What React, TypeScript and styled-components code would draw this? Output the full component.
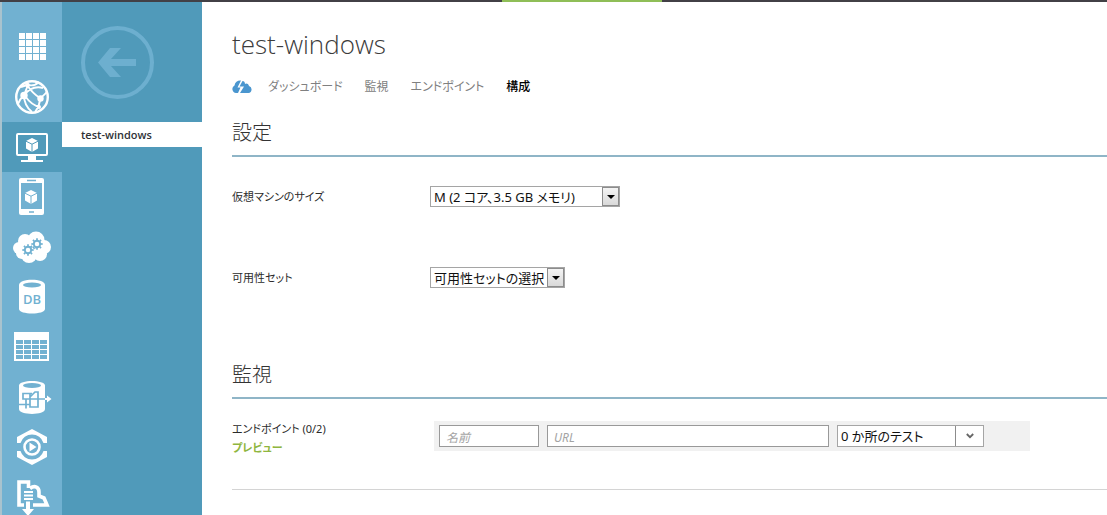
import React from "react";
import styled, { createGlobalStyle } from "styled-components";

const RAIL = "#71b1d1";
const BLUE = "#509aba";

const GlobalStyle = createGlobalStyle`
  *, *::before, *::after { box-sizing: border-box; }
  body {
    margin: 0;
    background: #fff;
    color: #2b2b2b;
    font-family: "Noto Sans", "Noto Sans CJK JP", sans-serif;
    font-feature-settings: "palt";
    font-size: 12px;
  }
  button, input, select { font: inherit; font-feature-settings: inherit; }
`;

const Page = styled.div`
  display: flex;
  flex-direction: column;
  height: 100vh;
  overflow: hidden;
`;

const TopBar = styled.div`
  flex: none;
  height: 2px;
  background: #424046;
  display: flex;
  justify-content: center;
  padding-left: 57px;
`;

const TopMark = styled.div`
  width: 160px;
  background: #8fbe57;
`;

const Body = styled.div`
  flex: 1;
  min-height: 0;
  display: flex;
`;

const Rail = styled.nav`
  flex: none;
  width: 62px;
  padding-top: 20px;
  border-left: 2px solid #a9c3ce;
  background: ${RAIL};
`;

const RailButton = styled.button<{ $active?: boolean }>`
  display: flex;
  align-items: center;
  justify-content: center;
  width: 100%;
  height: 50px;
  padding: 0;
  border: 0;
  background: ${(p) => (p.$active ? BLUE : "transparent")};
  color: ${(p) => (p.$active ? BLUE : RAIL)};
`;

const SubNav = styled.nav`
  flex: none;
  width: 140px;
  padding-top: 23px;
  background: ${BLUE};
`;

const BackButton = styled.button`
  display: block;
  margin: 0 0 22px 18px;
  padding: 0;
  border: 0;
  background: none;
  height: 75px;
`;

const SubNavLink = styled.a`
  display: block;
  height: 25px;
  padding-left: 19px;
  background: #fff;
  color: #2f3237;
  font-family: "Open Sans", sans-serif;
  font-size: 11px;
  font-weight: 600;
  line-height: 25px;
  text-decoration: none;
`;

const Main = styled.main`
  flex: 1;
  min-width: 0;
  padding: 24px 0 0 30px;
`;

const Title = styled.h1`
  margin: 0;
  color: #3c3c3c;
  font-family: "Open Sans", sans-serif;
  font-size: 26px;
  font-weight: 300;
  line-height: 36px;
`;

const Tabs = styled.nav`
  display: flex;
  align-items: center;
  gap: 22px;
  height: 20px;
  margin-top: 15px;
`;

const Logo = styled.svg`
  margin-right: -6px;
`;

const Tab = styled.a<{ $active?: boolean }>`
  color: ${(p) => (p.$active ? "#000" : "#808080")};
  font-weight: ${(p) => (p.$active ? 500 : 400)};
  line-height: 20px;
  text-decoration: none;
`;

const SectionTitle = styled.h2`
  margin: 22px 0 0;
  padding-bottom: 8px;
  border-bottom: 2px solid #8fb5c7;
  color: #333;
  font-size: 20px;
  font-weight: 300;
  line-height: 28px;
`;

const Fields = styled.div`
  display: flex;
  flex-direction: column;
  gap: 60px;
  padding: 29px 0 51px;
`;

const Field = styled.div`
  display: flex;
  align-items: center;
`;

const LabelCell = styled.div`
  flex: none;
  width: 198px;
  font-size: 11px;
  line-height: 19px;
`;

const Preview = styled.a`
  display: block;
  color: #8fb63f;
  font-weight: 700;
  text-decoration: none;
`;

const SelectBox = styled.div<{ $width: number; $height: number }>`
  display: grid;
  flex: none;
  width: ${(p) => p.$width}px;
  height: ${(p) => p.$height}px;
  border: 1px solid #a5a5a5;
  background: #fff;
  > * { grid-area: 1 / 1; }
`;

const Select = styled.select`
  appearance: none;
  width: 100%;
  height: 100%;
  padding: 0 18px 0 3px;
  border: 0;
  background: none;
  color: #111;
  font-size: 13px;
`;

const ArrowCell = styled.span<{ $flat?: boolean }>`
  display: flex;
  align-items: center;
  justify-content: center;
  justify-self: end;
  width: ${(p) => (p.$flat ? 28 : 17)}px;
  border: solid #8c8c8c;
  border-width: ${(p) => (p.$flat ? "0 0 0 1px" : "1px")};
  background: ${(p) => (p.$flat ? "#fff" : "linear-gradient(#f4f4f4, #d9d9d9)")};
  pointer-events: none;
`;

const EndpointRow = styled.div`
  display: flex;
  align-items: flex-start;
  padding-top: 20px;
  min-height: 91px;
  border-bottom: 1px solid #d4d4d4;
`;

const EndpointPanel = styled.div`
  flex: 1;
  display: flex;
  gap: 8px;
  max-width: 596px;
  height: 30px;
  margin: 2px 0 0 4px;
  padding: 4px 46px 4px 5px;
  background: #f1f1f1;
`;

const TextInput = styled.input<{ $grow?: boolean }>`
  flex: ${(p) => (p.$grow ? "1 1 0" : "0 0 100px")};
  min-width: 0;
  width: 100px;
  height: 22px;
  padding: 2px 6px 0;
  border: 1px solid #999;
  background: #fff;
  &::placeholder {
    color: #a3a3a3;
    font-style: italic;
    opacity: 1;
  }
`;

function Cube({ x, y }: { x: number; y: number }) {
  return (
    <g transform={`translate(${x} ${y})`}>
      <path d="M0-7 6-4v7.500L0 7l-6-3.500V-4z" fill="#fff" />
      <path d="M-6-3.800 0-.8l6-3M0-.8V7" fill="none" stroke="currentColor" strokeWidth="1" />
    </g>
  );
}

function Gear({ x, y }: { x: number; y: number }) {
  return (
    <g transform={`translate(${x} ${y})`} fill="none" stroke="currentColor">
      <circle r="3.200" strokeWidth="1.900" />
      {[0, 45, 90, 135, 180, 225, 270, 315].map((a) => (
        <path key={a} d="M0-3.800V-5.700" strokeWidth="1.700" transform={`rotate(${a})`} />
      ))}
    </g>
  );
}

const steps = [0, 1, 2, 3];

const icons: { name: string; art: React.ReactNode }[] = [
  {
    name: "すべてのアイテム",
    art: steps.flatMap((r) =>
      steps.map((c) => <rect key={`${r}${c}`} x={7 + c * 7} y={6 + r * 7} width="6" height="6" fill="#fff" />)
    ),
  },
  {
    name: "Web サイト",
    art: (
      <g fill="none" stroke="#fff" strokeWidth="1.900">
        <circle cx="20" cy="20" r="15.800" strokeWidth="2.400" />
        <path d="M12 18C17 12 24 9 31 11M16 8l-4 10M15 8c4 6 8 10 13 13M15 8l-6 2M12 18c-3 3-5 6-6 9M12 18c0 7 3 13 8 17M28 21c0 5-2 10-5 14M28 21c3-2 6-4 7-7M13 19c5 7 9 10 15 11M16 8c4 1 8 0 11-3" />
        <g fill="#fff" stroke="none">
          <circle cx="12" cy="18.500" r="3.700" />
          <circle cx="28.500" cy="21.500" r="3.200" />
          <circle cx="15.500" cy="8" r="2.300" />
          <circle cx="27" cy="30" r="2" />
        </g>
      </g>
    ),
  },
  {
    name: "仮想マシン",
    art: (
      <>
        <rect x="5" y="7" width="30" height="21" rx="1" fill="none" stroke="#fff" strokeWidth="2" />
        <path d="M16 29h8v4h7v2H9v-2h7z" fill="#fff" />
        <Cube x={20} y={18} />
      </>
    ),
  },
  {
    name: "モバイル サービス",
    art: (
      <>
        <rect x="7" y="1" width="25" height="37" rx="2" fill="#fff" />
        <rect x="9" y="6" width="21" height="26" fill="currentColor" />
        <path d="M15 3.500h9M17 35h5" stroke="currentColor" strokeWidth="1.500" />
        <Cube x={19} y={20} />
      </>
    ),
  },
  {
    name: "クラウド サービス",
    art: (
      <>
        <g fill="#fff">
          <circle cx="7" cy="21" r="6" />
          <circle cx="13" cy="14" r="7" />
          <circle cx="24" cy="13" r="8.500" />
          <circle cx="32" cy="20" r="7" />
          <circle cx="28" cy="27" r="7" />
          <circle cx="17" cy="28" r="8" />
          <circle cx="10" cy="26" r="6" />
        </g>
        <Gear x={16} y={23} />
        <Gear x={25} y={17} />
      </>
    ),
  },
  {
    name: "SQL データベース",
    art: (
      <>
        <path d="M7 8c0-7 26-7 26 0v24c0 6-26 6-26 0z" fill="#fff" />
        <ellipse cx="20" cy="8" rx="9" ry="2.600" fill="currentColor" />
        <text x="20" y="27" textAnchor="middle" fill="currentColor" fontFamily="Open Sans, sans-serif" fontSize="13" fontWeight="600">
          DB
        </text>
      </>
    ),
  },
  {
    name: "ストレージ",
    art: (
      <>
        <rect x="2" y="5" width="35" height="29" fill="#fff" />
        {steps.flatMap((r) =>
          steps.map((c) => (
            <rect key={`${r}${c}`} x={4 + c * 8} y={13 + r * 5} width="7" height="4" fill="currentColor" />
          ))
        )}
      </>
    ),
  },
  {
    name: "HDInsight",
    art: (
      <>
        <path d="M7 8.500c0-6 26-6 26 0V32c0 6.500-26 6.500-26 0z" fill="#fff" />
        <ellipse cx="20" cy="8.500" rx="9" ry="2.600" fill="currentColor" />
        <path
          d="M20 16.500h-9V22h22M7 27.500h11V17M14 31.500v-4M18 20l5-5h3v15h-8v-3M14 22v5"
          fill="none"
          stroke="currentColor"
          strokeWidth="1.700"
        />
        <path d="M33 21h2v-2.500l4.500 3.500-4.500 3.500V23h-2z" fill="#fff" />
      </>
    ),
  },
  {
    name: "メディア サービス",
    art: (
      <>
        <path d="M5 16v-6L20 2l15 8v6h-3.500a12 12 0 0 0-23 0zM5 24v6l15 8 15-8v-6h-3.500a12 12 0 0 1-23 0z" fill="#fff" />
        <circle cx="20" cy="20" r="7.500" fill="none" stroke="#fff" strokeWidth="2.600" />
        <path d="M17.500 15.500v9l7-4.500z" fill="#fff" />
      </>
    ),
  },
  {
    name: "インポート",
    art: (
      <>
        <path
          d="M12 28H7V5h9.500v6M18 11.500c5-4 9-1 9 3.500v4l5 2 3 7H21"
          fill="none"
          stroke="#fff"
          strokeWidth="3.600"
        />
        <path d="M12 15h9M12 18.500h9M12 22h9" stroke="#fff" strokeWidth="2" />
        <path d="M14 24.500h4V32h4l-6 7-6-7h4z" fill="#fff" />
      </>
    ),
  },
];

function Triangle() {
  return (
    <svg width="8" height="4" viewBox="0 0 8 4" aria-hidden="true">
      <path d="M0 0h8L4 4z" fill="#000" />
    </svg>
  );
}

function Chevron() {
  return (
    <svg width="8" height="6" viewBox="0 0 8 6" aria-hidden="true">
      <path d="M.8 1 4 4.200 7.200 1" fill="none" stroke="#666" strokeWidth="1.800" />
    </svg>
  );
}

export default function App() {
  return (
    <>
      <GlobalStyle />
      <Page>
        <TopBar>
          <TopMark />
        </TopBar>
        <Body>
          <Rail>
            {icons.map((icon, i) => (
              <RailButton key={icon.name} type="button" aria-label={icon.name} $active={i === 2}>
                <svg width="40" height="40" viewBox="0 0 40 40" aria-hidden="true">
                  {icon.art}
                </svg>
              </RailButton>
            ))}
          </Rail>
          <SubNav>
            <BackButton type="button" aria-label="戻る">
              <svg width="75" height="75" viewBox="0 0 75 75" aria-hidden="true">
                <circle cx="37.500" cy="37.500" r="34.500" fill="none" stroke="#6dafcf" strokeWidth="4" />
                <path d="M18 37.500 30 23h11L31 34h25v7H31l10 11H30z" fill="#6dafcf" />
              </svg>
            </BackButton>
            <SubNavLink href="#vm">test-windows</SubNavLink>
          </SubNav>
          <Main>
            <Title>test-windows</Title>
            <Tabs>
              <Logo width="20" height="14" viewBox="0 0 20 14" aria-hidden="true">
                <path
                  d="M6 13H4A4 4 0 0 1 2.500 5.500C3 2 6 .2 9 .6L5.500 7.500H8.500zM10.500 1 7.500 6.500H12L8 13h8.500a3.600 3.600 0 0 0 .5-7C16.500 3 13.500 3 13 4 13 2 12 1 10.500 1z"
                  fill="#4a96cf"
                />
              </Logo>
              <Tab href="#dashboard">ダッシュボード</Tab>
              <Tab href="#monitor">監視</Tab>
              <Tab href="#endpoints">エンドポイント</Tab>
              <Tab href="#configure" $active aria-current="page">
                構成
              </Tab>
            </Tabs>
            <SectionTitle>設定</SectionTitle>
            <Fields>
              <Field>
                <LabelCell>
                  <label htmlFor="size">仮想マシンのサイズ</label>
                </LabelCell>
                <SelectBox $width={190} $height={21}>
                  <Select id="size">
                    <option>M (2 コア、3.5 GB メモリ)</option>
                  </Select>
                  <ArrowCell>
                    <Triangle />
                  </ArrowCell>
                </SelectBox>
              </Field>
              <Field>
                <LabelCell>
                  <label htmlFor="availability">可用性セット</label>
                </LabelCell>
                <SelectBox $width={135} $height={21}>
                  <Select id="availability">
                    <option>可用性セットの選択</option>
                  </Select>
                  <ArrowCell>
                    <Triangle />
                  </ArrowCell>
                </SelectBox>
              </Field>
            </Fields>
            <SectionTitle>監視</SectionTitle>
            <EndpointRow>
              <LabelCell>
                エンドポイント (0/2)
                <Preview href="#preview">プレビュー</Preview>
              </LabelCell>
              <EndpointPanel>
                <TextInput aria-label="名前" placeholder="名前" />
                <TextInput aria-label="URL" placeholder="URL" $grow />
                <SelectBox $width={147} $height={22}>
                  <Select aria-label="テストの場所">
                    <option>0 か所のテスト</option>
                  </Select>
                  <ArrowCell $flat>
                    <Chevron />
                  </ArrowCell>
                </SelectBox>
              </EndpointPanel>
            </EndpointRow>
          </Main>
        </Body>
      </Page>
    </>
  );
}
